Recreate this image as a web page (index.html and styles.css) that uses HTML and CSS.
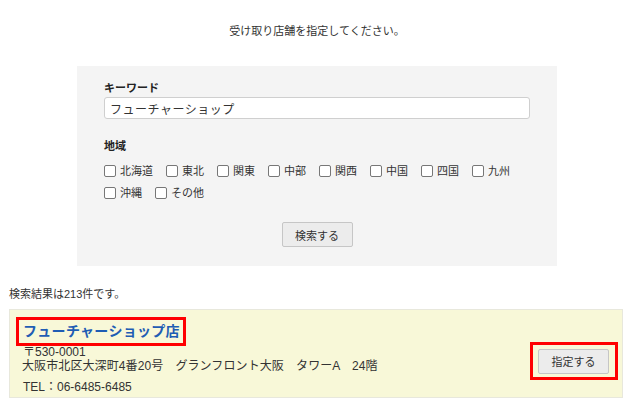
FILE: index.html
```html
<!DOCTYPE html>
<html lang="ja">
<head>
    <meta charset="UTF-8">
    <meta name="viewport" content="width=device-width, initial-scale=1.0">
    <title>受け取り店舗の指定</title>
    <link rel="stylesheet" href="styles.css">
</head>
<body>
    <p class="lead">受け取り店舗を指定してください。</p>

    <!-- 検索フォーム -->
    <form class="search-panel" onsubmit="return false;">
        <div class="field-label">キーワード</div>
        <input class="keyword" type="text" value="フューチャーショップ">

        <div class="field-label area-label">地域</div>
        <div class="areas">
            <label class="area"><input type="checkbox">北海道</label>
            <label class="area"><input type="checkbox">東北</label>
            <label class="area"><input type="checkbox">関東</label>
            <label class="area"><input type="checkbox">中部</label>
            <label class="area"><input type="checkbox">関西</label>
            <label class="area"><input type="checkbox">中国</label>
            <label class="area"><input type="checkbox">四国</label>
            <label class="area"><input type="checkbox">九州</label>
            <label class="area"><input type="checkbox">沖縄</label>
            <label class="area"><input type="checkbox">その他</label>
        </div>

        <div class="search-action">
            <button class="btn" type="submit">検索する</button>
        </div>
    </form>

    <p class="result-count">検索結果は213件です。</p>

    <!-- 検索結果 -->
    <div class="shop">
        <div class="shop-info">
            <div class="shop-name"><a href="#">フューチャーショップ店</a></div>
            <div class="shop-zip">〒530-0001</div>
            <div class="shop-address">大阪市北区大深町4番20号　グランフロント大阪　タワーA　24階</div>
            <div class="shop-tel">TEL：06-6485-6485</div>
        </div>
        <div class="shop-select">
            <button class="btn" type="button">指定する</button>
        </div>
    </div>
</body>
</html>
```

FILE: styles.css
```css
body {
    margin: 0;
    font-family: "Liberation Sans", "Noto Sans CJK JP", sans-serif;
    font-size: 11px;
    color: #333;
    background: #fff;
}
.lead {
    margin: 23px 0 0;
    line-height: 16px;
    text-align: center;
}
.search-panel {
    width: 480px;
    margin: 27px auto 0;
    padding: 14px 27px 19px 27px;
    box-sizing: border-box;
    background: #f4f4f4;
}
.field-label {
    font-weight: bold;
    line-height: 16px;
    color: #222;
}
.area-label {
    margin-top: 19px;
}
.keyword {
    display: block;
    width: 100%;
    height: 22px;
    margin: 1px 0 0;
    padding: 0 5px;
    box-sizing: border-box;
    border: 1px solid #cfcfcf;
    border-radius: 3px;
    background: #fff;
    font-family: inherit;
    font-size: 12px;
    letter-spacing: 0.5px;
    color: #333;
}
.areas {
    display: flex;
    flex-wrap: wrap;
    margin-top: 6px;
}
.area {
    display: flex;
    align-items: center;
    height: 22px;
    margin-right: 13px;
    line-height: 22px;
}
.area input {
    appearance: none;
    width: 12px;
    height: 12px;
    margin: 0 4px 0 0;
    border: 1px solid #777;
    border-radius: 2px;
    background: #fff;
}
.search-action {
    display: flex;
    justify-content: center;
    margin-top: 18px;
}
.btn {
    width: 71px;
    height: 25px;
    padding: 0;
    border: 1px solid #c6c6c6;
    border-radius: 2px;
    background: #ececec;
    font-family: inherit;
    font-size: 11px;
    color: #333;
}
.result-count {
    margin: 20px 0 0 9px;
    line-height: 16px;
}
.shop {
    display: flex;
    justify-content: space-between;
    margin: 7px 11px 0 9px;
    padding: 7px 4px 2px 6px;
    border: 1px solid #e8e8dc;
    background: #f8f8d8;
}
.shop-name {
    display: inline-block;
    padding: 0 3px 0 4px;
    border: 3px solid #f00;
    line-height: 23px;
    font-size: 14px;
    font-weight: bold;
    letter-spacing: 0.3px;
}
.shop-name a {
    color: #1f5db4;
    text-decoration: none;
}
.shop-info {
    font-size: 12px;
}
.shop-zip {
    margin-left: 7px;
    line-height: 13px;
}
.shop-address {
    margin-left: 6px;
    line-height: 15px;
    letter-spacing: 0.1px;
}
.shop-tel {
    margin: 5px 0 0 7px;
    line-height: 16px;
}
.shop-select {
    align-self: center;
    margin-top: 9px;
    padding: 4px 6px 3px 5px;
    border: 3px solid #f00;
    line-height: 0;
}
```
